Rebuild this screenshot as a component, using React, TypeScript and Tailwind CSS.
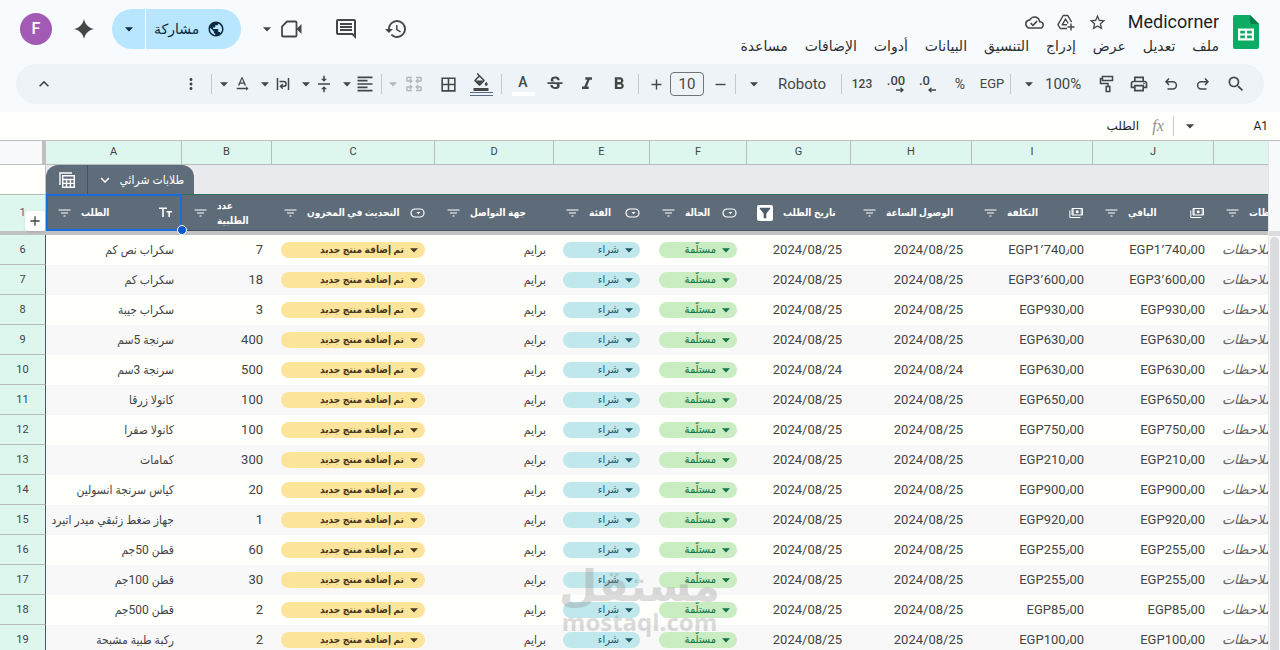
import { ReactNode, useState } from "react";
import {
  MdAdd,
  MdArrowDropDown,
  MdBorderAll,
  MdFilterAlt,
  MdFormatAlignLeft,
  MdFormatBold,
  MdFormatColorFill,
  MdFormatItalic,
  MdHistory,
  MdKeyboardArrowDown,
  MdKeyboardArrowUp,
  MdMoreVert,
  MdOutlineCloudDone,
  MdOutlineInsertComment,
  MdOutlinePrint,
  MdPublic,
  MdRemove,
  MdSearch,
  MdStarBorder,
  MdStrikethroughS,
  MdTextRotationNone,
  MdVerticalAlignCenter,
} from "react-icons/md";

type ColumnType = "text" | "chip" | "money" | "none";

interface Column {
  letter: string;
  width: string;
  title: string;
  type: ColumnType;
  filtered?: boolean;
}

const columns: Column[] = [
  { letter: "A", width: "w-[136px]", title: "الطلب", type: "text" },
  { letter: "B", width: "w-[90px]", title: "عدد الطلبية", type: "none" },
  { letter: "C", width: "w-[163px]", title: "التحديث في المخزون", type: "chip" },
  { letter: "D", width: "w-[119px]", title: "جهة التواصل", type: "none" },
  { letter: "E", width: "w-[96px]", title: "الفئة", type: "chip" },
  { letter: "F", width: "w-[97px]", title: "الحالة", type: "chip" },
  { letter: "G", width: "w-[104px]", title: "تاريخ الطلب", type: "none", filtered: true },
  { letter: "H", width: "w-[121px]", title: "الوصول الساعة", type: "none" },
  { letter: "I", width: "w-[121px]", title: "التكلفة", type: "money" },
  { letter: "J", width: "w-[121px]", title: "الباقي", type: "money" },
  { letter: "K", width: "w-[121px]", title: "ملاحظات", type: "none" },
];

const rows = [
  { id: 6, item: "سكراب نص كم", qty: 7, date: "2024/08/25", cost: "EGP1٬740٫00" },
  { id: 7, item: "سكراب كم", qty: 18, date: "2024/08/25", cost: "EGP3٬600٫00" },
  { id: 8, item: "سكراب جيبة", qty: 3, date: "2024/08/25", cost: "EGP930٫00" },
  { id: 9, item: "سرنجة 5سم", qty: 400, date: "2024/08/25", cost: "EGP630٫00" },
  { id: 10, item: "سرنجة 3سم", qty: 500, date: "2024/08/24", cost: "EGP630٫00" },
  { id: 11, item: "كانولا زرقا", qty: 100, date: "2024/08/25", cost: "EGP650٫00" },
  { id: 12, item: "كانولا صفرا", qty: 100, date: "2024/08/25", cost: "EGP750٫00" },
  { id: 13, item: "كمامات", qty: 300, date: "2024/08/25", cost: "EGP210٫00" },
  { id: 14, item: "كياس سرنجة انسولين", qty: 20, date: "2024/08/25", cost: "EGP900٫00" },
  { id: 15, item: "جهاز ضغط زئبقي ميدر اتيرد", qty: 1, date: "2024/08/25", cost: "EGP920٫00" },
  { id: 16, item: "قطن 50جم", qty: 60, date: "2024/08/25", cost: "EGP255٫00" },
  { id: 17, item: "قطن 100جم", qty: 30, date: "2024/08/25", cost: "EGP255٫00" },
  { id: 18, item: "قطن 500جم", qty: 2, date: "2024/08/25", cost: "EGP85٫00" },
  { id: 19, item: "ركبة طبية مشبحة", qty: 2, date: "2024/08/25", cost: "EGP100٫00" },
];

const menus = ["ملف", "تعديل", "عرض", "إدراج", "التنسيق", "البيانات", "أدوات", "الإضافات", "مساعدة"];

function Tool({
  label,
  className = "w-8",
  children,
}: {
  label: string;
  className?: string;
  children: ReactNode;
}) {
  return (
    <button
      aria-label={label}
      className={`h-8 shrink-0 flex items-center justify-center rounded hover:bg-black/5 ${className}`}
    >
      {children}
    </button>
  );
}

function Divider({ className }: { className: string }) {
  return <span className={`w-px h-5 shrink-0 bg-[#c3c9cd] ${className}`} />;
}

function Caret() {
  return (
    <span className="w-4 shrink-0 flex justify-center">
      <svg width="8" height="5" viewBox="0 0 8 5" fill="currentColor">
        <path d="M0 .3h8L4 4.500z" />
      </svg>
    </span>
  );
}

// Tool with its own menu arrow on the left
function MenuTool({ label, children }: { label: string; children: ReactNode }) {
  return (
    <Tool label={label} className="w-9">
      <Caret />
      <span className="w-5 flex justify-center">{children}</span>
    </Tool>
  );
}

function Decimals({ text, more }: { text: string; more?: boolean }) {
  return (
    <span className="flex flex-col">
      <span className="text-left text-[13px] leading-3 font-medium">{text}</span>
      <svg width="18" height="6" viewBox="0 0 18 6" fill="none" stroke="currentColor" strokeWidth="1.300">
        {more ? <path d="M9 3h7M13.500 .7 16 3l-2.500 2.300" /> : <path d="M17 3h-7M12.500 .7 10 3l2.500 2.300" />}
      </svg>
    </span>
  );
}

function WrapIcon() {
  return (
    <svg width="14" height="14" viewBox="0 0 14 14" fill="none" stroke="currentColor" strokeWidth="1.500">
      <path d="M1.500 1v12M12.500 1v12M3.500 4.500h4.200a2.200 2.200 0 0 1 0 4.800H5M6.800 7 4.500 9.300l2.300 2.300" />
    </svg>
  );
}

function MergeIcon() {
  return (
    <svg width="18" height="16" viewBox="0 0 18 16" fill="none" stroke="currentColor" strokeWidth="1.500">
      <path d="M7 1.500H2v3.500h4.500M4.800 3 6.800 5l-2 2M11 1.500h5v3.500h-4.500M13.200 3l-2 2 2 2M7 14.500H2V11h4.500M4.800 9l2 2-2 2M11 14.500h5V11h-4.500M13.200 9l-2 2 2 2" />
    </svg>
  );
}

function UndoIcon({ flip }: { flip?: boolean }) {
  return (
    <svg
      width="14"
      height="14"
      viewBox="0 0 14 14"
      fill="none"
      stroke="currentColor"
      strokeWidth="1.500"
      className={flip ? "-scale-x-100" : ""}
    >
      <path d="M5 1.500 2 4.700l3 3.200M2 4.700h6.800a3.600 3.600 0 0 1 0 7.200H3.500" />
    </svg>
  );
}

function PaintIcon() {
  return (
    <svg width="16" height="18" viewBox="0 0 16 18" fill="none" stroke="currentColor" strokeWidth="1.500">
      <path d="M3.500 1.500h10v4h-10zM3.500 3.500h-2v5H9v3M7.200 11.500h3.600v5H7.200z" />
    </svg>
  );
}

function DriveAddIcon() {
  return (
    <svg width="18" height="17" viewBox="0 0 18 17" fill="none" stroke="currentColor" strokeWidth="1.400" strokeLinejoin="round">
      <path d="M10 14.500H3.200L1 10.700 6.200 1.500h4.600l3.800 6.700M10 10.800H5.200L8.500 5l2.700 4.500M14 9.500v7M10.500 13h7" />
    </svg>
  );
}

function FilterIcon() {
  return (
    <svg width="13" height="8" viewBox="0 0 13 8" fill="none" stroke="currentColor" strokeWidth="1.200">
      <path d="M.5 1h12M3 4h7M5.500 7h2" />
    </svg>
  );
}

function SheetsLogo() {
  return (
    <svg width="26" height="34" viewBox="0 0 26 34">
      <path d="M2 0h15l9 9v23a2 2 0 0 1-2 2H2a2 2 0 0 1-2-2V2a2 2 0 0 1 2-2z" fill="#0dab63" />
      <path d="M17 0l9 9h-7a2 2 0 0 1-2-2z" fill="#0b7d49" />
      <path d="M5 13.500h16v12H5zM7.200 15.700v2.700h4.700v-2.700zm6.900 0v2.700h4.700v-2.700zm-6.900 4.900v2.700h4.700v-2.700zm6.900 0v2.700h4.700v-2.700z" fill="#fff" fillRule="evenodd" />
    </svg>
  );
}

function TypeIcon({ type }: { type: ColumnType }) {
  if (type === "text") {
    return (
      <svg width="13" height="11" viewBox="0 0 13 11" fill="none" stroke="currentColor" strokeWidth="1.600">
        <path d="M0 1.200h8M4 1.200V10M7.500 4.800H13M10.200 4.800V10" />
      </svg>
    );
  }
  if (type === "chip") {
    return (
      <svg width="15" height="10" viewBox="0 0 15 10" fill="none" stroke="currentColor" strokeWidth="1.200">
        <rect x="1" y="1" width="13" height="8" rx="4" />
        <path d="M6.500 4h4l-2 2.200z" fill="currentColor" stroke="none" />
      </svg>
    );
  }
  if (type === "money") {
    return (
      <svg width="14" height="10" viewBox="0 0 14 10" fill="none" stroke="currentColor">
        <path d="M3 .5h10.500v6.500H3zM.8 2.500v7h10.500" />
        <path d="M3 .5h2v6.500H3zM11.500 .5h2v6.500h-2z" fill="currentColor" stroke="none" opacity=".6" />
        <circle cx="8.200" cy="3.700" r="1.500" fill="currentColor" stroke="none" />
      </svg>
    );
  }
  return null;
}

function Chip({
  label,
  options,
  className,
}: {
  label: string;
  options: string[];
  className: string;
}) {
  return (
    <span dir="rtl" className={`flex items-center gap-0.5 h-4 rounded-full pr-[3px] ${className}`}>
      <Caret />
      <select aria-label={label} className="flex-1 min-w-0 h-4 appearance-none leading-4 outline-none">
        {options.map((option) => (
          <option key={option}>{option}</option>
        ))}
      </select>
    </span>
  );
}

function Header() {
  const [title, setTitle] = useState("Medicorner");

  return (
    <header className="h-16 flex justify-between pl-5 pr-[21px]">
      <div className="flex items-center h-[58px]">
        <button aria-label="الحساب" className="size-8 rounded-full bg-[#a35ab5] text-white text-base font-medium">
          F
        </button>
        <button aria-label="Gemini" className="ml-[22px] size-5">
          <svg viewBox="0 0 20 20" fill="currentColor">
            <path d="M10 0c1.200 5.500 4.500 8.800 10 10-5.500 1.200-8.800 4.500-10 10-1.200-5.500-4.500-8.800-10-10 5.500-1.200 8.800-4.500 10-10z" />
          </svg>
        </button>
        <div className="ml-[18px] h-10 flex rounded-full overflow-hidden bg-[#b8e6fe] text-[#0b2a3f]">
          <button aria-label="خيارات المشاركة" className="w-[33px] flex items-center justify-center">
            <Caret />
          </button>
          <button className="w-24 flex items-center pl-2 gap-2 border-l border-white text-sm font-medium">
            مشاركة
            <MdPublic size={18} />
          </button>
        </div>
        <button aria-label="مكالمة" className="ml-[18px] flex items-center">
          <Caret />
          <svg width="22" height="18" viewBox="0 0 22 18" className="ml-1.5" fill="none" stroke="currentColor" strokeWidth="1.800">
            <path d="M6 1.500h8.500a1 1 0 0 1 1 1v13a1 1 0 0 1-1 1H2a1 1 0 0 1-1-1V6.500z" />
            <path d="M16 8.500 20.500 4v10L16 9.500z" fill="currentColor" stroke="none" />
          </svg>
        </button>
        <button aria-label="التعليقات" className="ml-[31px]">
          <MdOutlineInsertComment size={24} />
        </button>
        <button aria-label="سجل الإصدارات" className="ml-[26px]">
          <MdHistory size={24} />
        </button>
      </div>

      <div className="flex items-start gap-3.5">
        <div className="flex flex-col items-end pt-2">
          <div className="flex items-center h-7 gap-[13px]">
            <MdOutlineCloudDone size={19} />
            <DriveAddIcon />
            <MdStarBorder size={19} />
            <input
              aria-label="اسم الملف"
              value={title}
              onChange={(e) => setTitle(e.target.value)}
              className="w-[99px] text-right text-lg text-[#1f1f1f] outline-none"
            />
          </div>
          <nav dir="rtl" className="flex gap-[17px] text-sm leading-5 text-[#2b2f31]">
            {menus.map((menu) => (
              <button key={menu}>{menu}</button>
            ))}
          </nav>
        </div>
        <div className="pt-[15px]">
          <SheetsLogo />
        </div>
      </div>
    </header>
  );
}

function Toolbar() {
  return (
    <div role="toolbar" className="h-10 mx-4 mb-2 pl-3 pr-3 flex items-center rounded-full bg-[#eef3f7] text-[#444746]">
      <Tool label="إخفاء القوائم">
        <MdKeyboardArrowUp size={20} />
      </Tool>
      <div className="flex-1" />
      <Tool label="المزيد" className="w-6">
        <MdMoreVert size={18} />
      </Tool>
      <Divider className="ml-2 mr-1" />
      <div className="flex gap-[5px]">
        <MenuTool label="تدوير النص">
          <MdTextRotationNone size={18} />
        </MenuTool>
        <MenuTool label="التفاف النص">
          <WrapIcon />
        </MenuTool>
        <MenuTool label="محاذاة عمودية">
          <MdVerticalAlignCenter size={18} />
        </MenuTool>
        <MenuTool label="محاذاة أفقية">
          <MdFormatAlignLeft size={20} />
        </MenuTool>
      </div>
      <Divider className="ml-1.5 mr-0.5" />
      <Tool label="دمج الخلايا" className="w-10 gap-1 text-[#b4b8ba]">
        <Caret />
        <MergeIcon />
      </Tool>
      <Tool label="الحدود" className="w-8 ml-2 mr-px">
        <MdBorderAll size={19} />
      </Tool>
      <Tool label="لون التعبئة" className="w-8 flex-col">
        <MdFormatColorFill size={20} className="h-[18px]" />
        <span className="mt-px w-[23px] h-1 border-y border-[#5c6b84]" />
      </Tool>
      <Divider className="ml-1 mr-[5px]" />
      <Tool label="لون النص" className="w-8 flex-col">
        <span className="text-sm leading-[18px] font-medium">A</span>
        <span className="mt-px w-[23px] h-1 bg-white" />
      </Tool>
      <Tool label="يتوسطه خط">
        <MdStrikethroughS size={20} />
      </Tool>
      <Tool label="مائل">
        <MdFormatItalic size={20} />
      </Tool>
      <Tool label="غامق">
        <MdFormatBold size={20} />
      </Tool>
      <Divider className="mx-[3px]" />
      <Tool label="زيادة حجم الخط" className="w-7">
        <MdAdd size={17} />
      </Tool>
      <input
        aria-label="حجم الخط"
        defaultValue="10"
        className="w-[34px] h-6 mr-0.5 border border-[#70757a] rounded text-center text-[15px] outline-none"
      />
      <Tool label="تصغير حجم الخط" className="w-7">
        <MdRemove size={17} />
      </Tool>
      <Divider className="ml-px" />
      <div className="w-[105px] flex items-center pl-2.5 gap-4">
        <Caret />
        <select aria-label="الخط" className="flex-1 appearance-none text-[15px] outline-none">
          <option>Roboto</option>
          <option>Arial</option>
        </select>
      </div>
      <Divider className="mr-1" />
      <Tool label="مزيد من التنسيقات" className="w-8 mr-0.5">
        <span className="text-xs font-medium">123</span>
      </Tool>
      <Tool label="زيادة المنازل العشرية">
        <Decimals text=".00" more />
      </Tool>
      <Tool label="تقليل المنازل العشرية">
        <Decimals text=".0" />
      </Tool>
      <Tool label="نسبة مئوية">
        <span className="text-sm">%</span>
      </Tool>
      <Tool label="عملة">
        <span className="text-[13px]">EGP</span>
      </Tool>
      <Divider className="ml-0.5" />
      <div className="w-20 flex items-center pl-2.5 gap-2">
        <Caret />
        <select aria-label="تكبير" className="flex-1 appearance-none text-[15px] outline-none">
          <option>100%</option>
          <option>75%</option>
        </select>
      </div>
      <Tool label="نسخ التنسيق">
        <PaintIcon />
      </Tool>
      <Tool label="طباعة">
        <MdOutlinePrint size={20} />
      </Tool>
      <Tool label="تراجع">
        <UndoIcon />
      </Tool>
      <Tool label="إعادة">
        <UndoIcon flip />
      </Tool>
      <Tool label="بحث" className="w-8 ml-px">
        <MdSearch size={20} />
      </Tool>
    </div>
  );
}

function FormulaBar() {
  return (
    <div className="h-7 flex items-center bg-[#fffffc] pr-3 text-[#1f1f1f]">
      <input
        dir="rtl"
        aria-label="شريط الصيغة"
        defaultValue="الطلب"
        className="flex-1 text-xs outline-none"
      />
      <span className="w-[34px] pl-1 text-center text-base leading-5 italic text-[#8b8f92] font-['Liberation_Serif','DejaVu_Sans',serif]">
        fx
      </span>
      <span className="w-px h-5 bg-[#c3c9cd]" />
      <button aria-label="النطاقات المسماة" className="w-8 flex justify-center text-[#444746]">
        <MdArrowDropDown size={20} />
      </button>
      <input aria-label="مربع الاسم" defaultValue="A1" className="w-[62px] text-right text-xs outline-none" />
    </div>
  );
}

function HeaderCell({ column }: { column: Column }) {
  return (
    <th className="relative p-0 border-t border-t-[#2f7058] border-b border-b-[#46525e] font-bold">
      <div className="flex items-center h-[35px] pl-[11px] pr-2.5">
        {column.filtered ? (
          <button aria-label={`تصفية ${column.title}`} className="-ml-px size-4 shrink-0 bg-white text-[#4d5a67] rounded-[2px]">
            <MdFilterAlt size={16} />
          </button>
        ) : (
          <button aria-label={`تصفية ${column.title}`} className="w-3.5 shrink-0 flex justify-center">
            <FilterIcon />
          </button>
        )}
        <span
          className={`ml-2.5 text-left text-[10px] leading-[15px] ${
            column.letter === "B" ? "w-8" : "whitespace-nowrap"
          }`}
        >
          {column.title}
        </span>
        <span className="ml-auto">
          <TypeIcon type={column.type} />
        </span>
      </div>
      {column.letter === "A" && (
        <>
          <span className="absolute -inset-y-px inset-x-0 border-2 border-[#1b6bdb]" />
          <span className="absolute z-10 -right-[5px] -bottom-[5px] size-2.5 rounded-full border border-white bg-[#0b57d0]" />
        </>
      )}
    </th>
  );
}

function Sheet() {
  return (
    <main className="relative flex-1 min-h-0 flex border-t border-[#bcc0c2] bg-[#fffffc]">
      <div className="flex-1 min-w-0 overflow-hidden">
        <table className="w-[1335px] table-fixed border-separate border-spacing-0 text-[#434343] font-[Roboto,'DejaVu_Sans_Condensed','DejaVu_Sans',sans-serif]">
          <colgroup>
            <col className="w-[46px]" />
            {columns.map((column) => (
              <col key={column.letter} className={column.width} />
            ))}
          </colgroup>
          <thead>
            <tr className="h-6 bg-[#ddf7ef] text-[11px]">
              <th aria-label="تحديد الكل" className="p-0 border-b border-r-4 border-[#bfbfbf] bg-[#f8f9fa]" />
              {columns.map((column, index) => (
                <th key={column.letter} className="p-0 border-b border-r border-[#b5bcb9] font-normal">
                  {index < 10 ? column.letter : ""}
                </th>
              ))}
            </tr>
            <tr className="h-[29px]">
              <td className="p-0 border-r border-[#c4c7c5]" />
              <td colSpan={11} className="p-0 bg-[#e8eaed]">
                <div className="h-[29px] w-[148px] flex items-center rounded-t-xl bg-[#5f6d7a] text-white">
                  <button aria-label="خيارات الجدول" className="w-[42px] h-full flex items-center justify-center border-r border-[#46525e]">
                    <svg width="16" height="16" viewBox="0 0 16 16" fill="none" stroke="currentColor" strokeWidth="1.400">
                      <path d="M1 13V1h12M3.700 3.700h11.600v11.600H3.700zM3.700 7.500h11.600M3.700 11.400h11.600M7.500 7.500v7.800M11.400 7.500v7.800" />
                    </svg>
                  </button>
                  <button className="flex-1 flex items-center justify-between pl-2 pr-2.5 text-xs whitespace-nowrap">
                    <MdKeyboardArrowDown size={18} />
                    طلابات شرائي
                  </button>
                </div>
              </td>
            </tr>
            <tr className="bg-[#5e6c7a] text-white">
              <th className="relative p-0 bg-[#ddf7ef] border-t border-r border-[#b5bcb9] text-[11px] font-normal text-[#5f6368]">
                1
                <button
                  aria-label="إضافة صف"
                  className="absolute right-0 bottom-0 size-5 flex items-center justify-center rounded-sm bg-white shadow text-[#444746]"
                >
                  <MdAdd size={16} />
                </button>
              </th>
              {columns.map((column) => (
                <HeaderCell key={column.letter} column={column} />
              ))}
            </tr>
            <tr className="h-1 bg-[#c2c2c2]">
              <td colSpan={12} className="p-0" />
            </tr>
          </thead>
          <tbody>
            {rows.map((row) => (
              <tr key={row.id} className="h-[30px] bg-[#fffffc] even:bg-[#f8f8f8] whitespace-nowrap text-[13px]">
                <th className="p-0 pt-px bg-[#ddf7ef] border-b border-r border-b-[#b5bcb9] border-r-[#4b5563] text-[11px] leading-4 font-normal align-middle">
                  {row.id}
                </th>
                <td dir="rtl" className="p-0 pr-2 text-xs">{row.item}</td>
                <td className="p-0 pr-[9px] text-right">{row.qty}</td>
                <td className="py-0 pl-[9px] pr-2.5">
                  <Chip
                    label="التحديث في المخزون"
                    options={["تم إضافة منتج جديد"]}
                    className="bg-[#fde49b] text-[#473821] text-[10px] font-bold"
                  />
                </td>
                <td dir="rtl" className="p-0 pr-2 text-xs">برايم</td>
                <td className="py-0 pl-[9px] pr-2.5">
                  <Chip label="الفئة" options={["شراء"]} className="bg-[#bfe7ec] text-[#215a6c] text-[11px]" />
                </td>
                <td className="py-0 pl-[9px] pr-2.5">
                  <Chip label="الحالة" options={["مستلّمة"]} className="bg-[#c9ecc0] text-[#11734b] text-[11px]" />
                </td>
                <td className="p-0 pr-[9px] text-right">{row.date}</td>
                <td className="p-0 pr-[9px] text-right">{row.date}</td>
                <td className="p-0 pr-[9px] text-right">{row.cost}</td>
                <td className="p-0 pr-[9px] text-right">{row.cost}</td>
                <td className="p-0 pl-2 text-[13px] italic text-[#5f6368]">ملاحظات</td>
              </tr>
            ))}
          </tbody>
        </table>
      </div>

      <div className="w-3 shrink-0 flex flex-col bg-[#f8f9fa] border-l border-[#e3e5e7]">
        <div className="mt-[90px] h-[5px] bg-[#dcdcdc]" />
        <div className="mt-px mx-px flex-1 rounded-t-full bg-[#dadce0]" />
      </div>

      <div className="absolute bottom-4 left-[562px] w-[155px] flex flex-col items-center text-[#8a8a8a] opacity-30 pointer-events-none">
        <span className="text-[44px] leading-12 font-bold">مستقل</span>
        <span className="text-2xl leading-6 font-bold font-['Open_Sans',sans-serif]">mostaql.com</span>
      </div>
    </main>
  );
}

export default function App() {
  return (
    <div
      dir="ltr"
      className="h-screen flex flex-col overflow-hidden bg-[#f8fbfd] text-[#444746] font-[Roboto,'DejaVu_Sans',sans-serif]"
    >
      <Header />
      <Toolbar />
      <FormulaBar />
      <Sheet />
    </div>
  );
}
